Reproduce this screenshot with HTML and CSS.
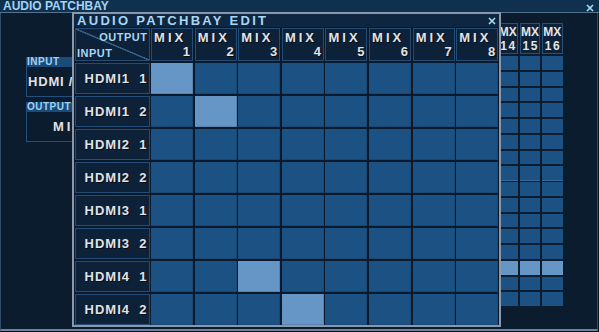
FILE: index.html
```html
<!DOCTYPE html>
<html lang="en">
<head>
    <meta charset="UTF-8">
    <meta name="viewport" content="width=device-width, initial-scale=1.0">
    <title>Audio Patchbay</title>
    <link rel="stylesheet" href="styles.css">
</head>
<body>

<div class="win">
    <div class="win-title">
        <span>AUDIO PATCHBAY</span>
        <svg class="close" width="8" height="8" viewBox="0 0 8 8"><path d="M1 1L7 7M7 1L1 7"/></svg>
    </div>

    <div class="win-body">
        <div class="side">
            <div class="field">
                <div class="field-label">INPUT</div>
                <div class="field-box">HDMI /</div>
            </div>
            <div class="field">
                <div class="field-label">OUTPUT</div>
                <div class="field-box out">MIX</div>
            </div>
        </div>

        <div class="mx">
            <div class="mx-head">MX<span>14</span></div>
            <div class="mx-head">MX<span>15</span></div>
            <div class="mx-head">MX<span>16</span></div>

            <div class="mx-cell"></div><div class="mx-cell"></div><div class="mx-cell"></div>
            <div class="mx-cell"></div><div class="mx-cell"></div><div class="mx-cell"></div>
            <div class="mx-cell"></div><div class="mx-cell"></div><div class="mx-cell"></div>
            <div class="mx-cell"></div><div class="mx-cell"></div><div class="mx-cell"></div>
            <div class="mx-cell"></div><div class="mx-cell"></div><div class="mx-cell"></div>
            <div class="mx-cell"></div><div class="mx-cell"></div><div class="mx-cell"></div>
            <div class="mx-cell"></div><div class="mx-cell"></div><div class="mx-cell"></div>
            <div class="mx-cell sep"></div><div class="mx-cell sep"></div><div class="mx-cell sep"></div>
            <div class="mx-cell"></div><div class="mx-cell"></div><div class="mx-cell"></div>
            <div class="mx-cell"></div><div class="mx-cell"></div><div class="mx-cell"></div>
            <div class="mx-cell"></div><div class="mx-cell"></div><div class="mx-cell"></div>
            <div class="mx-cell"></div><div class="mx-cell"></div><div class="mx-cell"></div>
            <div class="mx-cell"></div><div class="mx-cell"></div><div class="mx-cell"></div>
            <div class="mx-cell on"></div><div class="mx-cell on"></div><div class="mx-cell on"></div>
            <div class="mx-cell"></div><div class="mx-cell"></div><div class="mx-cell"></div>
            <div class="mx-cell"></div><div class="mx-cell"></div><div class="mx-cell"></div>
        </div>
    </div>

    <div class="dialog">
        <div class="dialog-title">
            <span>AUDIO PATCHBAY EDIT</span>
            <svg class="close" width="8" height="8" viewBox="0 0 8 8"><path d="M1 1L7 7M7 1L1 7"/></svg>
        </div>

        <div class="pb">
            <div class="corner"><span class="c-out">OUTPUT</span><span class="c-in">INPUT</span></div>
            <div class="head"><span class="h-mix">MIX</span><span class="h-num">1</span></div>
            <div class="head"><span class="h-mix">MIX</span><span class="h-num">2</span></div>
            <div class="head"><span class="h-mix">MIX</span><span class="h-num">3</span></div>
            <div class="head"><span class="h-mix">MIX</span><span class="h-num">4</span></div>
            <div class="head"><span class="h-mix">MIX</span><span class="h-num">5</span></div>
            <div class="head"><span class="h-mix">MIX</span><span class="h-num">6</span></div>
            <div class="head"><span class="h-mix">MIX</span><span class="h-num">7</span></div>
            <div class="head"><span class="h-mix">MIX</span><span class="h-num">8</span></div>

            <div class="row-lbl">HDMI1  1</div>
            <div class="cell on"></div><div class="cell"></div><div class="cell"></div><div class="cell"></div>
            <div class="cell"></div><div class="cell"></div><div class="cell"></div><div class="cell"></div>

            <div class="row-lbl">HDMI1  2</div>
            <div class="cell"></div><div class="cell on"></div><div class="cell"></div><div class="cell"></div>
            <div class="cell"></div><div class="cell"></div><div class="cell"></div><div class="cell"></div>

            <div class="row-lbl">HDMI2  1</div>
            <div class="cell"></div><div class="cell"></div><div class="cell"></div><div class="cell"></div>
            <div class="cell"></div><div class="cell"></div><div class="cell"></div><div class="cell"></div>

            <div class="row-lbl">HDMI2  2</div>
            <div class="cell"></div><div class="cell"></div><div class="cell"></div><div class="cell"></div>
            <div class="cell"></div><div class="cell"></div><div class="cell"></div><div class="cell"></div>

            <div class="row-lbl">HDMI3  1</div>
            <div class="cell"></div><div class="cell"></div><div class="cell"></div><div class="cell"></div>
            <div class="cell"></div><div class="cell"></div><div class="cell"></div><div class="cell"></div>

            <div class="row-lbl">HDMI3  2</div>
            <div class="cell"></div><div class="cell"></div><div class="cell"></div><div class="cell"></div>
            <div class="cell"></div><div class="cell"></div><div class="cell"></div><div class="cell"></div>

            <div class="row-lbl">HDMI4  1</div>
            <div class="cell"></div><div class="cell"></div><div class="cell on"></div><div class="cell"></div>
            <div class="cell"></div><div class="cell"></div><div class="cell"></div><div class="cell"></div>

            <div class="row-lbl">HDMI4  2</div>
            <div class="cell"></div><div class="cell"></div><div class="cell"></div><div class="cell on"></div>
            <div class="cell"></div><div class="cell"></div><div class="cell"></div><div class="cell"></div>
        </div>
    </div>
</div>

</body>
</html>
```

FILE: styles.css
```css
body {
    margin: 0;
    background-color: #07111d;
    font-family: "Liberation Sans", Arial, sans-serif;
    font-weight: bold;
}

.win {
    position: relative;
    width: 599px;
    height: 332px;
    overflow: hidden;
}

.close path {
    stroke: #a9dff0;
    stroke-width: 1.6;
    fill: none;
}

/* --- background window --- */
.win-title {
    height: 12px;
    display: flex;
    justify-content: space-between;
    align-items: center;
    padding: 0 5px 0 3px;
    background-color: #10304f;
    border-bottom: 1px solid #58728e;
    color: #a3d3f3;
    font-size: 12px;
    line-height: 12px;
}

.win-title .close {
    margin-top: 3px;
}

.win-body {
    width: 598px;
    height: 318px;
    box-sizing: border-box;
    display: flex;
    align-items: flex-start;
    background-color: #0b1c2f;
    border: 1px solid #324d69;
    border-top: 0;
    border-bottom: 2px solid #6c84a0;
}

.side {
    width: 104px;
    margin: 44px 0 0 25px;
    display: flex;
    flex-direction: column;
    gap: 5px;
}

.field-label {
    height: 10px;
    padding-left: 1px;
    background-color: #1b4b79;
    color: #a0d2f6;
    font-size: 10px;
    line-height: 10px;
    letter-spacing: 0.5px;
}

.field-box {
    height: 30px;
    box-sizing: border-box;
    padding-left: 1px;
    border: 1px solid #23507d;
    border-top: 0;
    color: #e2e2e2;
    font-size: 13px;
    line-height: 29px;
    letter-spacing: 0.8px;
    white-space: nowrap;
    overflow: hidden;
}

.field-box.out {
    padding-left: 26px;
    letter-spacing: 3px;
}

.mx {
    margin: 10px 34.5px 0 auto;
    display: grid;
    grid-template-columns: repeat(3, 20.5px);
    grid-template-rows: 31px repeat(16, 13.75px);
    column-gap: 1.75px;
    row-gap: 2px;
}

.mx-head {
    box-sizing: border-box;
    padding-top: 2px;
    display: flex;
    flex-direction: column;
    align-items: center;
    background-color: #0d2139;
    border: 1px solid #24507a;
    color: #e4e4e4;
    font-size: 12px;
    line-height: 13.5px;
}

.mx-head span {
    letter-spacing: 1.5px;
    margin-right: -1.5px;
}

.mx-cell {
    background-color: #1c5283;
}

.mx-cell.sep {
    box-shadow: 0 1px 0 #3d6b96;
}

.mx-cell.on {
    background-color: #6596c6;
}

/* --- edit dialog --- */
.dialog {
    position: absolute;
    left: 72px;
    top: 12px;
    width: 429px;
    height: 315px;
    box-sizing: border-box;
    border: 2px solid #8898ad;
    background-color: #0a1a2c;
}

.dialog-title {
    height: 13px;
    display: flex;
    justify-content: space-between;
    align-items: center;
    padding: 0 3px;
    background-color: #0e2640;
    border-bottom: 1px solid #0a1828;
    color: #a8d6f5;
    font-size: 13px;
    line-height: 13px;
    letter-spacing: 2.3px;
}

.pb {
    margin-left: 1px;
    display: grid;
    grid-template-columns: 74.5px repeat(8, 42px);
    grid-template-rows: 33px repeat(8, 31px);
    column-gap: 1.6px;
    row-gap: 2px;
}

.corner, .head, .row-lbl {
    box-sizing: border-box;
    background-color: #0d2139;
    border: 1px solid #234d76;
}

.corner {
    display: flex;
    flex-direction: column;
    justify-content: space-between;
    padding: 2px 1px 1px 1px;
    background: linear-gradient(to top right, transparent calc(50% - 1px), #33608b calc(50% - 0.5px), #33608b calc(50% + 0.5px), transparent calc(50% + 1px)), #0d2139;
    color: #a8d6f5;
    font-size: 11px;
    line-height: 12px;
    letter-spacing: 0.5px;
}

.c-out {
    text-align: right;
}

.head {
    display: flex;
    flex-direction: column;
    padding: 2px 2px 0 2px;
    color: #e2e2e2;
    font-size: 13px;
    line-height: 14px;
    text-shadow: 1px 1px 0 rgba(0, 0, 0, 0.6);
}

.h-mix {
    letter-spacing: 3px;
}

.h-num {
    text-align: right;
}

.row-lbl {
    padding-right: 1px;
    text-align: right;
    white-space: pre;
    color: #e2e2e2;
    font-size: 13px;
    line-height: 29px;
    letter-spacing: 1px;
    text-shadow: 1px 1px 0 rgba(0, 0, 0, 0.6);
}

.cell {
    background-color: #1c5283;
    box-shadow: inset -1px -1px 0 rgba(0, 0, 0, 0.12);
}

.cell.on {
    background-color: #6596c6;
}
```
